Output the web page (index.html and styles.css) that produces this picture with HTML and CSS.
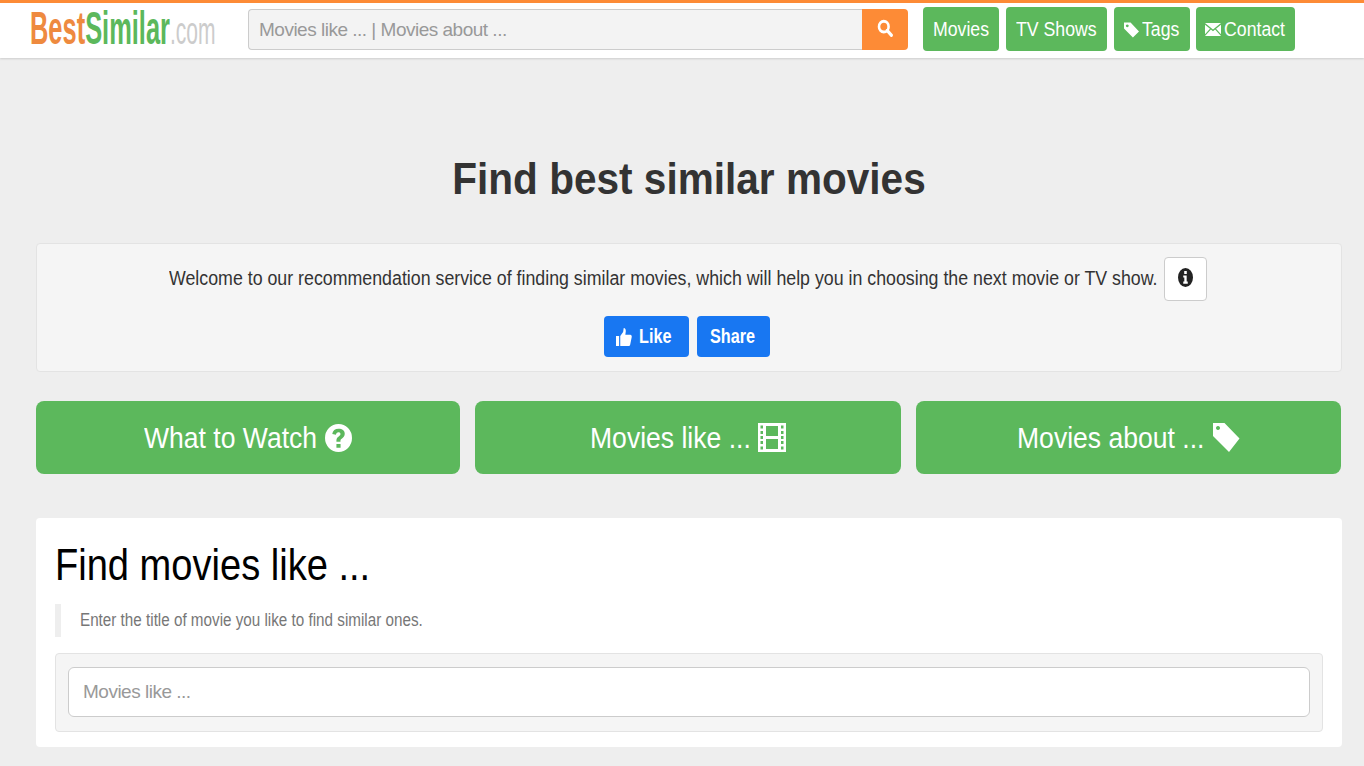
FILE: index.html
```html
<!DOCTYPE html>
<html>
<head>
    <title>BestSimilar.com</title>
    <link rel="stylesheet" href="styles.css">
</head>
<body>
    <header class="topbar">
        <a class="logo" href="#"><span class="logo-text"><span class="logo-best">Best</span><span class="logo-similar">Similar</span><span class="logo-com">.com</span></span></a>
        <form class="search">
            <input type="text" class="search-input" placeholder="Movies like ... | Movies about ..." autocomplete="off">
            <button type="button" class="search-btn" aria-label="Search">
                <svg class="icon-search" viewBox="0 0 16 16" preserveAspectRatio="none"><circle cx="6.8" cy="6.8" r="4.8" fill="none" stroke="#fff" stroke-width="2.6"/><path d="M10.2 10.2L14.4 14.4" stroke="#fff" stroke-width="3" stroke-linecap="round"/></svg>
            </button>
        </form>
        <nav class="nav">
            <a class="nav-btn nav-movies" href="#"><span class="narrow w-movies">Movies</span></a>
            <a class="nav-btn nav-tv" href="#"><span class="narrow w-tv">TV Shows</span></a>
            <a class="nav-btn nav-tags" href="#">
                <svg class="icon-tag-sm" viewBox="0 0 16 16"><path fill="#fff" fill-rule="evenodd" d="M0 0h7l9 9.500L9.500 16 0 6.500zM3.500 2a1.500 1.500 0 1 0 .01 0z"/></svg><span class="narrow w-tags">Tags</span></a>
            <a class="nav-btn nav-contact" href="#">
                <svg class="icon-mail" viewBox="0 0 16 13" preserveAspectRatio="none"><path fill="#fff" d="M0 0h16L8 6.500zM0 1.800v9.400L5 5.800zM16 1.800v9.400L11 5.800zM5.900 6.600L8 8.300l2.100-1.700L16 13H0z"/></svg><span class="narrow w-contact">Contact</span></a>
        </nav>
    </header>

    <main class="page">
        <h1 class="title">Find best similar movies</h1>

        <section class="welcome">
            <div class="welcome-row">
                <span class="narrow w-welcome">Welcome to our recommendation service of finding similar movies, which will help you in choosing the next movie or TV show.</span>
                <button type="button" class="info-btn" aria-label="Info">
                    <svg class="icon-info" viewBox="1 1 14 14" preserveAspectRatio="none"><path fill="#222" fill-rule="evenodd" d="M8 1a7 7 0 1 1 0 14A7 7 0 0 1 8 1zM6.800 3.200v2.200h2.400V3.200zM5.900 6.500v1.500h1v3H5.900v1.600h4.200V11h-1V6.500z"/></svg>
                </button>
            </div>
            <div class="fb-row">
                <a class="fb-btn fb-like" href="#">
                    <svg class="icon-thumb" viewBox="0 0 18 16" preserveAspectRatio="none"><path fill="#fff" d="M0 7h3.500v9H0zM4.800 7.200L8 3.500 8.700 0c1.700 0 2.500 1.300 2.300 3L10.500 6H16c1.300 0 2 1 1.700 2.100L16 14.600c-.3.900-1 1.400-1.900 1.400H4.800z"/></svg><span class="fb-text w-like">Like</span></a>
                <a class="fb-btn fb-share" href="#"><span class="fb-text w-share">Share</span></a>
            </div>
        </section>

        <div class="big-buttons">
            <a class="big-btn" href="#"><span class="narrow w-watch">What to Watch</span>
                <svg class="icon-big" viewBox="0 0 26 26" preserveAspectRatio="none"><path fill="#fff" fill-rule="evenodd" d="M13 0a13 13 0 1 1 0 26A13 13 0 0 1 13 0zM11 18.500v3.500h4v-3.500zM13 4.500c-3.300 0-5.500 1.800-6 4.700l3.500.8c.3-1.500 1.100-2.300 2.400-2.300 1.200 0 2 .6 2 1.600 0 .9-.6 1.400-1.700 2.200-1.300.9-2.200 1.900-2.200 3.600v1.400h3.900v-1c0-.8.400-1.200 1.500-2 1.500-1.100 2.600-2.300 2.600-4.400 0-3-2.500-4.600-5.800-4.600z"/></svg>
            </a>
            <a class="big-btn" href="#"><span class="narrow w-like-big">Movies like ...</span>
                <svg class="icon-film" viewBox="0 0 28 29" preserveAspectRatio="none"><path fill="#fff" fill-rule="evenodd" d="M0 0h28v29H0zM2.500 2.500v3h2.500v-3zM2.500 8v3h2.500V8zM2.500 13v3h2.500v-3zM2.500 18v3h2.500v-3zM2.500 23.500v3h2.500v-3zM23 2.500v3h2.500v-3zM23 8v3h2.500V8zM23 13v3h2.500v-3zM23 18v3h2.500v-3zM23 23.500v3h2.500v-3zM8 3v10h12V3zM8 16v10h12V16z"/></svg>
            </a>
            <a class="big-btn" href="#"><span class="narrow w-about">Movies about ...</span>
                <svg class="icon-tag-big" viewBox="0 0 28 32" preserveAspectRatio="none"><path fill="#fff" fill-rule="evenodd" d="M1 1h11.500L27.500 17 17 31 1 14.500zM6 4.200a2 2 0 1 0 .01 0z"/></svg>
            </a>
        </div>

        <section class="card">
            <h2 class="card-title">Find movies like ...</h2>
            <p class="card-note"><span class="narrow">Enter the title of movie you like to find similar ones.</span></p>
            <div class="well">
                <input type="text" class="well-input" placeholder="Movies like ..." autocomplete="off">
            </div>
        </section>
    </main>
</body>
</html>
```

FILE: styles.css
```css
body {
    margin: 0;
    background-color: #eee;
    color: #333;
    font-family: "Liberation Sans", Arial, sans-serif;
    overflow: hidden;
}

a {
    text-decoration: none;
}

/* the text on this page is set tall and thin */
.narrow {
    display: block;
    white-space: nowrap;
    transform-origin: left center;
    transform: scaleX(0.885);
}

.w-movies {
    width: 56px;
}

.w-tv {
    width: 81px;
}

.w-tags {
    width: 38px;
}

.w-contact {
    width: 62px;
}

.w-welcome {
    width: 989px;
}

.w-watch {
    width: 174px;
}

.w-like-big {
    width: 160px;
}

.w-about {
    width: 187px;
}

.topbar {
    display: flex;
    align-items: center;
    height: 55px;
    background-color: #fff;
    border-top: 3px solid #fd8b36;
    box-shadow: 0 1px 2px #ccc;
}

.logo {
    flex: none;
    width: 218px;
    padding-left: 30px;
    box-sizing: border-box;
    margin-top: -2px;
}

.logo-text {
    display: block;
    white-space: nowrap;
    font-size: 46px;
    font-weight: bold;
    line-height: 52px;
    transform-origin: left center;
    transform: scaleX(0.553);
}

.logo-best {
    color: #ee8a3f;
}

.logo-similar {
    color: #5cb85c;
}

.logo-com {
    color: #ccc;
    font-size: 38px;
    font-weight: normal;
}

.search {
    display: flex;
    margin-left: 30px;
    width: 660px;
    height: 41px;
    margin-top: -2px;
}

.search-input {
    flex: 1;
    min-width: 0;
    box-sizing: border-box;
    padding: 0 10px;
    font-family: inherit;
    font-size: 19px;
    letter-spacing: -0.5px;
    background-color: #f3f3f3;
    border: 1px solid #ccc;
    border-right: none;
    border-radius: 4px 0 0 4px;
}

.search-input::placeholder,
.well-input::placeholder {
    color: #999;
    opacity: 1;
}

.search-btn {
    width: 46px;
    padding: 0;
    border: none;
    background-color: #fd8b36;
    border-radius: 0 4px 4px 0;
}

.icon-search {
    width: 16px;
    height: 18px;
    display: block;
    margin: -3px auto 0;
}

.nav {
    display: flex;
    margin-left: 15px;
    margin-top: -4px;
    gap: 7px;
}

.nav-btn {
    display: flex;
    align-items: center;
    justify-content: center;
    box-sizing: border-box;
    height: 44px;
    padding-top: 2px;
    background-color: #5cb85c;
    color: #fff;
    font-size: 20px;
    border-radius: 4px;
}

.nav-movies {
    width: 76px;
}

.nav-tv {
    width: 101px;
}

.nav-tags {
    width: 76px;
    margin-left: 0;
}

.nav-contact {
    width: 99px;
    margin-left: -1px;
}

.icon-tag-sm {
    width: 15px;
    height: 16px;
    margin-right: 3px;
}

.icon-mail {
    width: 16px;
    height: 13px;
    margin-right: 3px;
}

.page {
    padding: 0 22px 0 36px;
}

.title {
    margin: 96px 0 0;
    height: 89px;
    font-size: 44px;
    line-height: 50px;
    font-weight: bold;
    text-align: center;
    color: #333;
    transform: scaleX(0.922);
}

.welcome {
    box-sizing: border-box;
    height: 129px;
    background-color: #f5f5f5;
    border: 1px solid #e3e3e3;
    border-radius: 4px;
    text-align: center;
    padding-top: 13px;
}

.welcome-row {
    display: flex;
    align-items: center;
    justify-content: center;
    gap: 6px;
    font-size: 20px;
    padding-right: 2px;
    margin-top: -1px;
}

.w-welcome {
    margin-top: 0;
    transform: scaleX(0.889);
}

.info-btn {
    width: 43px;
    height: 44px;
    padding: 0;
    margin-top: 1px;
    background-color: #fff;
    border: 1px solid #ccc;
    border-radius: 4px;
}

.icon-info {
    display: block;
    width: 15px;
    height: 19px;
    margin: -3px auto 0;
}

.fb-row {
    display: flex;
    justify-content: center;
    gap: 8px;
    margin-top: 15px;
    padding-right: 4px;
}

.fb-btn {
    display: flex;
    align-items: center;
    justify-content: center;
    box-sizing: border-box;
    height: 41px;
    background-color: #1877f2;
    color: #fff;
    font-size: 20px;
    font-weight: bold;
    border-radius: 4px;
}

.fb-text {
    display: block;
    white-space: nowrap;
    transform-origin: left center;
    transform: scaleX(0.81);
}

.w-like {
    width: 33px;
}

.w-share {
    width: 45px;
}

.fb-like {
    width: 85px;
    padding-right: 5px;
}

.fb-share {
    width: 73px;
    padding-right: 2px;
}

.icon-thumb {
    width: 16px;
    height: 18px;
    margin-right: 7px;
}

.big-buttons {
    display: grid;
    grid-template-columns: 424px 426px 425px;
    gap: 15px;
    margin-top: 29px;
}

.big-btn {
    display: flex;
    align-items: center;
    justify-content: center;
    gap: 8px;
    height: 73px;
    background-color: #5cb85c;
    color: #fff;
    font-size: 30px;
    border-radius: 8px;
}

.icon-big {
    width: 27px;
    height: 28px;
    margin-left: -1px;
}

.icon-film {
    width: 28px;
    height: 29px;
}

.icon-tag-big {
    width: 28px;
    height: 31px;
    margin-top: -1px;
}

.card {
    box-sizing: border-box;
    height: 229px;
    margin-top: 44px;
    padding: 0 19px;
    background-color: #fff;
    border-radius: 4px;
}

.card-title {
    margin: 0;
    padding-top: 24px;
    font-size: 44px;
    line-height: 46px;
    font-weight: normal;
    color: #000;
    white-space: nowrap;
    transform-origin: left center;
    transform: scaleX(0.865);
}

.card-note {
    box-sizing: border-box;
    height: 33px;
    margin: 16px 0 0;
    padding-left: 19px;
    border-left: 6px solid #eee;
    font-size: 17.500px;
    line-height: 33px;
    color: #777;
}

.card-note .narrow {
    transform: scaleX(0.87);
}

.well {
    box-sizing: border-box;
    height: 79px;
    margin-top: 16px;
    padding: 13px 12px;
    background-color: #f5f5f5;
    border: 1px solid #e3e3e3;
    border-radius: 4px;
}

.well-input {
    box-sizing: border-box;
    display: block;
    width: 100%;
    height: 50px;
    padding: 0 14px;
    font-family: inherit;
    font-size: 19px;
    letter-spacing: -0.5px;
    background-color: #fff;
    border: 1px solid #ccc;
    border-radius: 6px;
}
```
